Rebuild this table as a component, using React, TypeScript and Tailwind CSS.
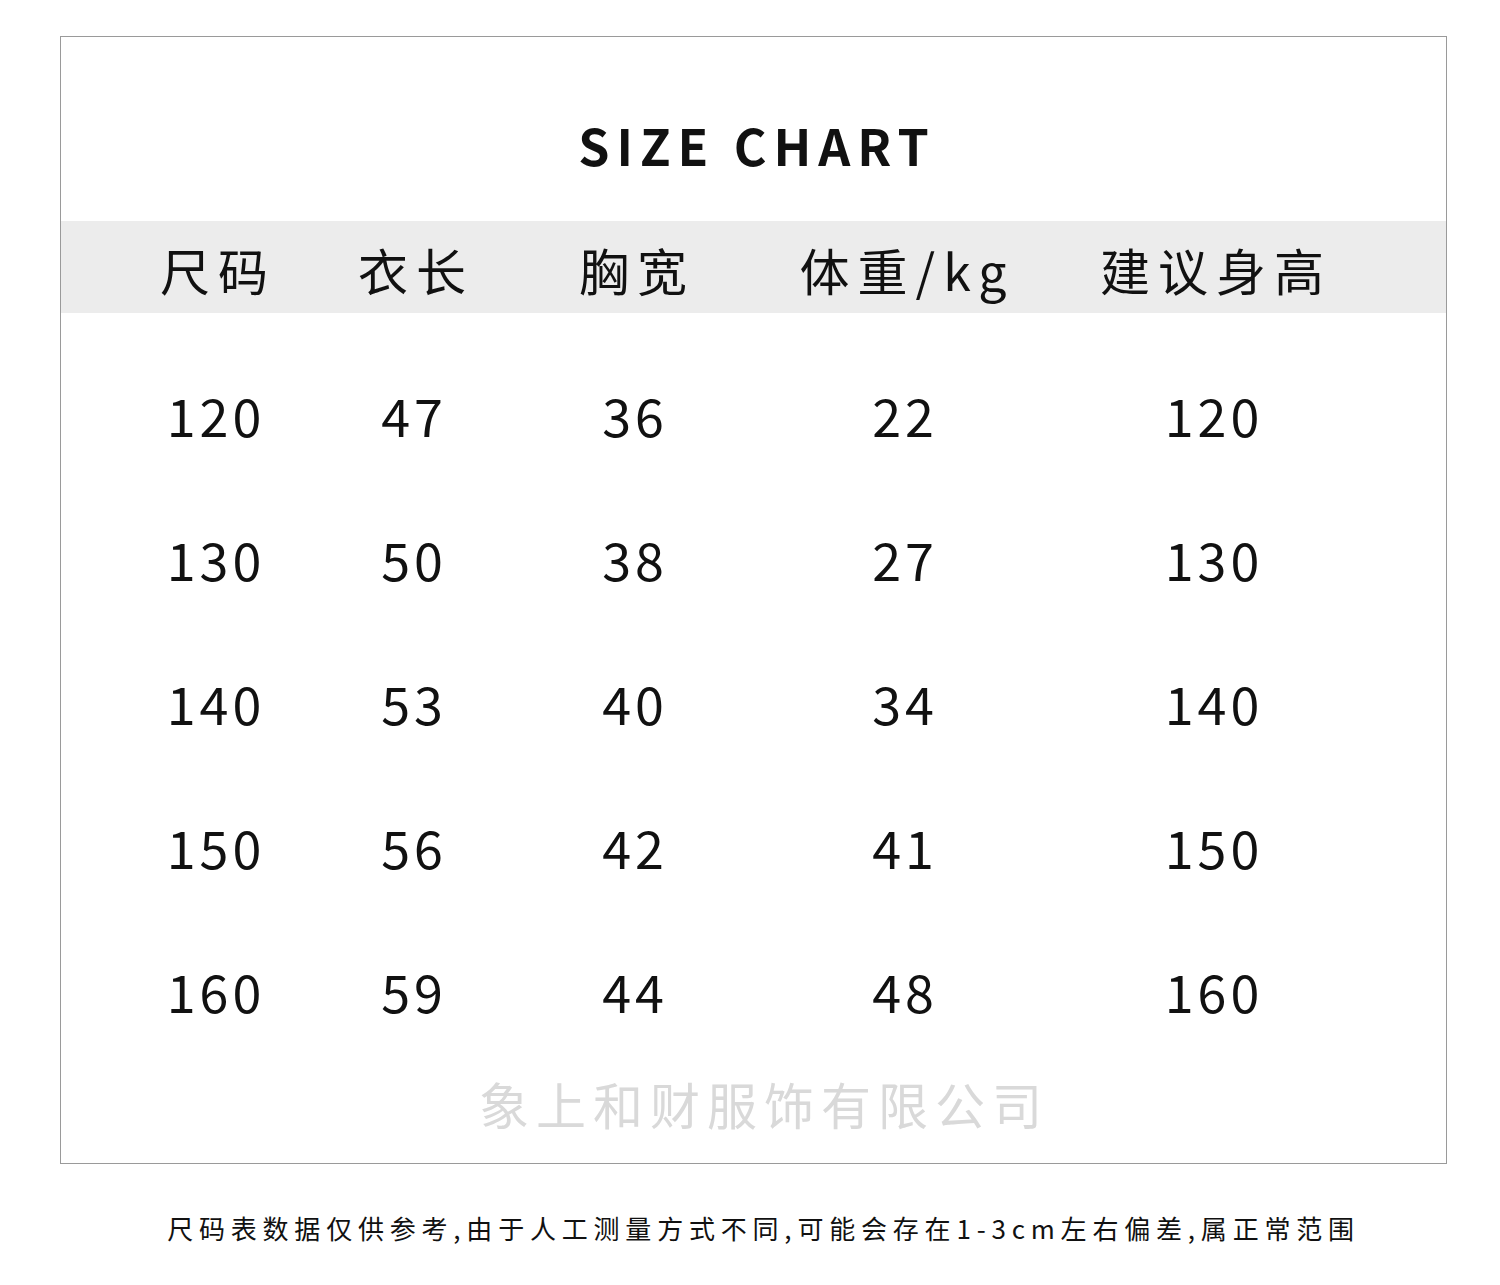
const HEADERS = ["尺码", "衣长", "胸宽", "体重/kg", "建议身高"];

const ROWS: string[][] = [
  ["120", "47", "36", "22", "120"],
  ["130", "50", "38", "27", "130"],
  ["140", "53", "40", "34", "140"],
  ["150", "56", "42", "41", "150"],
  ["160", "59", "44", "48", "160"],
];

const FONT = "font-['Noto_Sans_CJK_SC','Noto_Sans',sans-serif]";

// column widths chosen so each column's centre matches the chart
const COLS = "grid grid-cols-[198px_198px_244px_296px_322px] pl-[54px]";

export default function App() {
  return (
    <div className={`w-[1500px] h-[1285px] bg-white text-[#111] ${FONT}`}>
      <div className="pt-[36px] pl-[60px]">
        <div className="w-[1387px] border border-[#9a9a9a] flex flex-col">
          <div className="h-[184px] pt-[30px] flex items-center justify-center">
            <h1 className="text-[50px] leading-none font-bold tracking-[7px] pl-[7px]">SIZE CHART</h1>
          </div>

          <div className={`h-[92px] bg-[#ececec] items-center ${COLS}`}>
            {HEADERS.map((h) => (
              <div key={h} className="text-center text-[50px] leading-none tracking-[8px] pl-[8px] pt-[4px]">
                {h}
              </div>
            ))}
          </div>

          <div className="pt-[30px]">
            {ROWS.map((row, i) => (
              <div key={i} className={`h-[144px] items-center ${COLS}`}>
                {row.map((v, j) => (
                  <div key={j} className="text-center text-[52px] leading-none tracking-[4px] pl-[4px]">
                    {v}
                  </div>
                ))}
              </div>
            ))}
          </div>

          <div className="h-[60px] mt-[10px] mb-[30px] flex items-center justify-center pl-[14px]">
            <span className="text-[50px] leading-none tracking-[7px] pl-[7px] text-[#d9d9d9]">象上和财服饰有限公司</span>
          </div>
        </div>
      </div>

      <p className="mt-[49px] text-center text-[26px] leading-[30px] tracking-[5.8px] pl-[27px]">
        尺码表数据仅供参考,由于人工测量方式不同,可能会存在1-3cm左右偏差,属正常范围
      </p>
    </div>
  );
}
